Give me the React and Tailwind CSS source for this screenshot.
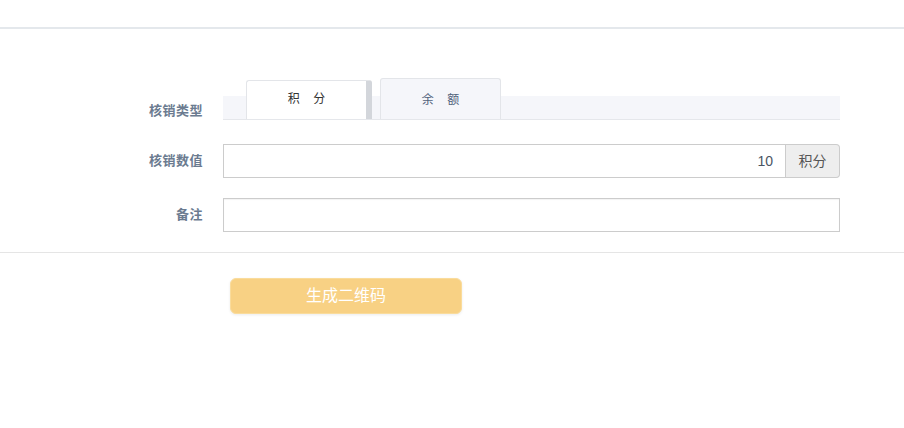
import React from "react";

const font = { fontFamily: '"Liberation Sans", "Noto Sans CJK SC", sans-serif' };

function Label({ children }) {
  return (
    <div className="w-[203px] shrink-0 text-right text-[13px] font-bold tracking-[0.5px] text-[#6b7b90]">
      {children}
    </div>
  );
}

export default function App() {
  return (
    <div
      className="min-h-[428px] bg-white pt-[27px] font-['Liberation_Sans','Noto_Sans_CJK_SC',sans-serif]"
    >
      <div className="h-[2px] bg-[#e4e8ec]" />

      {/* Form */}
      <div className="pt-[50px]">
        {/* 核销类型 */}
        <div className="flex items-end">
          <Label>
            <span className="block">核销类型</span>
          </Label>
          <div className="ml-[20px] flex h-[41px] w-[617px] items-end border-b border-[#e5e7eb] bg-[linear-gradient(to_bottom,transparent_17px,#f5f6fa_17px)] pl-[23px]">
            <div className="flex h-[39px] w-[126px] items-center justify-center rounded-t-[3px] border border-b-0 border-r-[6px] border-[#e3e5e9] border-r-[#d3d6db] bg-white pb-[2px] text-[12px] text-[#333]">
              积&nbsp;&nbsp;&nbsp;&nbsp;分
            </div>
            <div className="ml-[8px] flex h-[41px] w-[121px] items-center justify-center rounded-t-[3px] border border-b-0 border-[#e3e5e9] bg-[#f5f6fa] pt-[2px] text-[12px] text-[#50627a]">
              余&nbsp;&nbsp;&nbsp;&nbsp;额
            </div>
          </div>
        </div>

        {/* 核销数值 */}
        <div className="mt-[24px] flex items-center">
          <Label>核销数值</Label>
          <div className="ml-[20px] flex h-[34px] w-[617px]">
            <div className="flex flex-1 items-center justify-end border border-[#cccccc] pr-[12px] text-[14px] text-[#4b5563]">
              10
            </div>
            <div className="flex w-[54px] items-center justify-center rounded-r-[4px] border border-l-0 border-[#cccccc] bg-[#eeeeee] text-[14px] text-[#555]">
              积分
            </div>
          </div>
        </div>

        {/* 备注 */}
        <div className="mt-[20px] flex items-center">
          <Label>备注</Label>
          <div className="ml-[20px] h-[34px] w-[617px] border border-[#cccccc] shadow-[inset_0_1px_1px_rgba(0,0,0,0.05)]" />
        </div>
      </div>

      <div className="mt-[20px] h-px bg-[#e5e5e5]" />

      <div className="pl-[230px] pt-[25px]">
        <button
          type="button"
          className="flex h-[36px] w-[232px] items-center justify-center rounded-[6px] border border-[#fadc9c] bg-[#f8d184] text-[16px] text-white shadow-[0_1px_3px_rgba(0,0,0,0.08)]"
          style={font}
        >
          生成二维码
        </button>
      </div>
    </div>
  );
}
